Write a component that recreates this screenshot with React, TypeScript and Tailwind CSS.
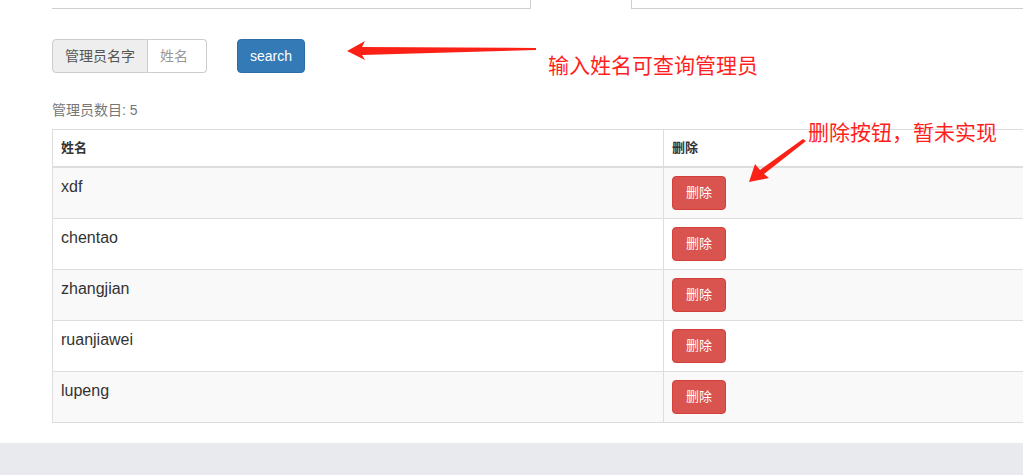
const admins = ["xdf", "chentao", "zhangjian", "ruanjiawei", "lupeng"];

const font = { fontFamily: '"Liberation Sans", "Noto Sans CJK SC", sans-serif' };

function Arrows() {
  return (
    <svg
      className="absolute left-0 top-0 pointer-events-none"
      width={1023}
      height={475}
      viewBox="0 0 1023 475"
    >
      <polygon
        points="347,51 365,41 362,47 536,48 536,50 362,55 365,60"
        fill="#fb2117"
      />
      <polygon
        points="749,182 755,164 760,170 803,139 806,141 764,174 769,178"
        fill="#fb2117"
      />
    </svg>
  );
}

export default function App() {
  return (
    <div
      className="relative w-[1023px] h-[475px] overflow-hidden bg-white flex flex-col text-[#333]"
      style={font}
    >
      <div className="flex-1 pl-[52px]">
        {/* cut-off panels above */}
        <div className="flex h-[9px]">
          <div className="w-[479px] border-b border-r border-[#cfcfcf]" />
          <div className="w-[100px]" />
          <div className="flex-1 border-b border-l border-[#cfcfcf]" />
        </div>

        <div className="mt-[30px] flex items-center">
          <div className="flex h-[34px] text-[14px]">
            <span className="flex items-center px-3 bg-[#eeeeee] border border-[#cccccc] rounded-l text-[#555]">
              管理员名字
            </span>
            <input
              className="w-[59px] px-3 border border-l-0 border-[#cccccc] rounded-r outline-none placeholder:text-[#999]"
              placeholder="姓名"
            />
          </div>
          <button className="ml-[30px] h-[34px] px-3 bg-[#337ab7] border border-[#2e6da4] rounded text-white text-[14px]">
            search
          </button>
        </div>

        <div className="mt-[27px] h-[20px] leading-[20px] text-[14px] text-[#777]">
          管理员数目: 5
        </div>

        <table className="mt-[9px] w-[1100px] border-collapse border border-[#dddddd]">
          <thead>
            <tr className="text-[13px] font-bold text-left">
              <th className="w-[611px] px-2 py-2 leading-[20px] border border-b-2 border-[#dddddd]">
                姓名
              </th>
              <th className="px-2 py-2 leading-[20px] border border-b-2 border-[#dddddd]">
                删除
              </th>
            </tr>
          </thead>
          <tbody>
            {admins.map((name, i) => (
              <tr key={name} className={i % 2 === 0 ? "bg-[#f9f9f9]" : "bg-white"}>
                <td className="px-2 py-2 align-top text-[16px] leading-[21px] border border-[#dddddd]">
                  {name}
                </td>
                <td className="px-2 py-2 align-top border border-[#dddddd]">
                  <button className="h-[34px] px-[13px] bg-[#d9534f] border border-[#d43f3a] rounded text-white text-[13px]">
                    删除
                  </button>
                </td>
              </tr>
            ))}
          </tbody>
        </table>
      </div>

      <div className="h-[32px] bg-[#e9eaee]" />

      <Arrows />
      <div className="absolute left-[548px] top-[52px] text-[21px] leading-[28px] text-[#ff1f1f]">
        输入姓名可查询管理员
      </div>
      <div className="absolute left-[808px] top-[119px] text-[21px] leading-[28px] text-[#ff1f1f]">
        删除按钮，暂未实现
      </div>
    </div>
  );
}
